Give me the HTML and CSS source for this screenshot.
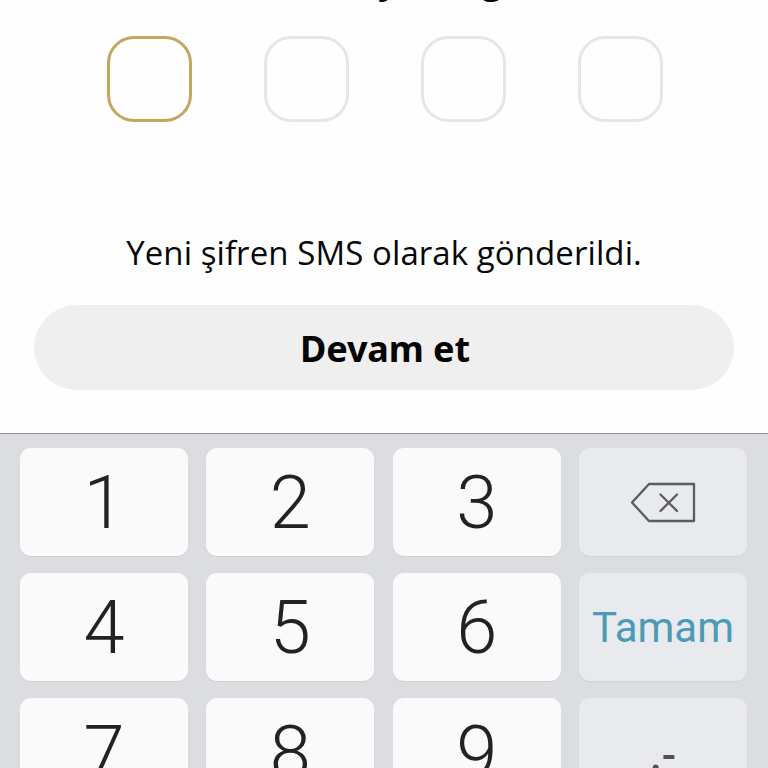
FILE: index.html
```
<!DOCTYPE html>
<html lang="tr">
<head>
<meta charset="utf-8">
<title>Şifre</title>
<link rel="stylesheet" href="styles.css">
</head>
<body>
<main class="screen">
  <section class="form">
    <div class="title"><span>y</span><span>g</span></div>
    <div class="pin">
      <div class="box active"></div>
      <div class="box"></div>
      <div class="box"></div>
      <div class="box"></div>
    </div>
    <p class="message">Yeni şifren SMS olarak gönderildi.</p>
    <button class="submit"><span>Devam et</span></button>
  </section>
  <section class="keyboard">
    <div class="key">1</div>
    <div class="key">2</div>
    <div class="key">3</div>
    <div class="key side">
      <svg class="backspace" width="68" height="42" viewBox="0 0 68 42" fill="none" stroke="#5b5c60" stroke-width="2.300" stroke-linejoin="round" stroke-linecap="round">
        <path d="M20 2H65V39H20L3 20.500Z"/>
        <path d="M31.500 12.500L48 29M48 12.500L31.500 29"/>
      </svg>
    </div>
    <div class="key">4</div>
    <div class="key">5</div>
    <div class="key">6</div>
    <div class="key side done">Tamam</div>
    <div class="key">7</div>
    <div class="key">8</div>
    <div class="key">9</div>
    <div class="key side punct">.-</div>
  </section>
</main>
</body>
</html>
```
FILE: styles.css
```
* { box-sizing: border-box; }
body { margin: 0; background: #fefefe; }
.screen {
  width: 768px;
  height: 768px;
  overflow: hidden;
  display: flex;
  flex-direction: column;
}
.form {
  height: 433px;
  flex: none;
  display: flex;
  flex-direction: column;
  align-items: center;
  font-family: "Open Sans", sans-serif;
  color: #080808;
}
.title {
  height: 36px;
  width: 124px;
  margin-left: 112px;
  display: flex;
  justify-content: space-between;
  font-size: 36px;
  font-weight: 700;
  line-height: 40px;
  margin-top: -40px;
  margin-bottom: 40px;
}
.pin {
  display: flex;
  justify-content: space-between;
  width: 556px;
  margin-left: 2px;
}
.box {
  width: 85px;
  height: 86px;
  border: 3px solid #e6e6e6;
  border-radius: 27px;
}
.box.active { border-color: #c4a661; }
.message {
  margin: 106px 0 0;
  height: 48px;
  line-height: 50px;
  font-size: 33px;
  letter-spacing: 0.08px;
  white-space: nowrap;
}
.submit {
  width: 700px;
  height: 85px;
  margin-top: 29px;
  border: 0;
  border-radius: 43px;
  background: #efefef;
  color: #050505;
  font: 700 36px/50px "Noto Sans", sans-serif;
  letter-spacing: -0.1px;
  padding: 2px 0 0 2px;
}
.keyboard {
  flex: none;
  height: 400px;
  padding: 14px 21px 0 20px;
  border-top: 1px solid #8f9095;
  background: #dcdde1;
  display: grid;
  grid-template-columns: repeat(4, 168px);
  grid-auto-rows: 108px;
  justify-content: space-between;
  align-content: start;
  row-gap: 17px;
}
.key {
  display: flex;
  align-items: center;
  justify-content: center;
  border-radius: 11px;
  background: #fafafb;
  box-shadow: 0 1px 1px #d0d1d5;
  color: #222;
  font: 300 74px/108px Roboto, sans-serif;
  padding-top: 2px;
}
.side { background: #e9eaee; }
.done {
  color: #4b9bb7;
  font-size: 42px;
  font-weight: 400;
}
.punct {
  font-size: 42px;
  font-weight: 500;
  color: #505156;
  padding-top: 7px;
}
.backspace { display: block; }
```
